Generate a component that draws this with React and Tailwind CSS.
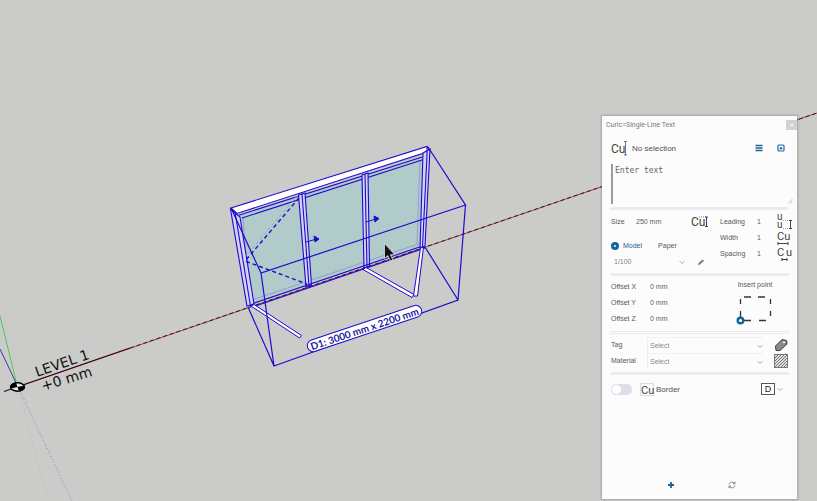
import { useState } from 'react';

// Shared bits of styling
const ROW_LABEL = 'text-[7px] leading-4 text-[#55585c]';
const ROW_VALUE = 'min-w-0 bg-transparent text-[7px] leading-4 text-[#5c5f63] outline-none';

/* ===================================================================
   SCENE (3D view behind the palette)
   =================================================================== */
function Scene() {
  return (
    <svg
      className="absolute inset-0 h-full w-full"
      viewBox="0 0 817 501"
      preserveAspectRatio="xMinYMin slice"
      fill="none"
    >
      {/* Axes */}
      <path d="M0 316 17 385" stroke="#4fc94f" />
      <path d="M0 349 17 385" stroke="#3b36b8" />
      <path d="M19 390 48 501" stroke="#8fc28f" strokeDasharray="1 3" strokeWidth=".8" />
      <path d="M20 391 72 501" stroke="#77789c" strokeDasharray="1 2" strokeWidth=".8" />
      <path d="M17 387 817 113" stroke="#a8404e" />
      <path d="M130 348 817 113" stroke="#3a181d" strokeDasharray="4 3" />
      <path d="M4 391.500 130 348" stroke="#33090f" strokeWidth="1.200" />

      {/* Level marker */}
      <ellipse cx="17.500" cy="387" rx="7" ry="4.200" fill="#e8e8e6" stroke="#000" strokeWidth="1.500" />
      <path d="M17.500 387 16 382.800C12 383 10 385.500 10.500 388.500ZM17.500 387 24.500 385.500C25 388.500 22 391 19 391.200Z" fill="#000" />
      <g fill="#111" fontFamily="'DejaVu Sans', sans-serif">
        <text transform="translate(37 377) rotate(-19)" fontSize="14">LEVEL 1</text>
        <text transform="translate(43 391) rotate(-17)" fontSize="14">+0 mm</text>
      </g>

      {/* Glass */}
      <path d="M240 215 423 157 421 247 253 304Z" fill="#b1caca" />
      <g stroke="#8f92d6" strokeWidth=".8">
        <path d="M252 300 421 243M239 211 427 153M243 217 249 298M420 160 417 244" />
      </g>

      {/* Frame */}
      <g stroke="#1d0ad0" strokeWidth="1.100">
        <path d="M231 208 427 146.500 430 151 237 213.500Z" fill="#fff" />
        <path d="M238 215.500 427 155.500M242 218 422 160" />
        <path d="M230.500 209 240 217 254 304 247 306Z" fill="#d5d3f0" />
        <path d="M235 212 250.500 306" />
        <path d="M298.500 195 305 193 311.500 285 306 287Z" fill="#d5d3f0" />
        <path d="M302 194 309 286" />
        <path d="M362 175 368 173 369.500 266 364 268Z" fill="#d5d3f0" />
        <path d="M365 174 367 267" />
        <path d="M423 153 430 149 425 246 420 248Z" fill="#d5d3f0" />
        <path d="M427 147 427 155 422.500 247" />
        <path d="M253 303.500 421 246.500M254 306.500 425 248" />
      </g>

      {/* Opening symbols */}
      <path d="M299 198 245 261 307 284" stroke="#1d0ad0" strokeWidth="1.400" strokeDasharray="4 3" />
      <path d="M297 196 246 256" stroke="#9a9cd0" strokeDasharray="3 3" />
      <g stroke="#1d0ad0" fill="#1d0ad0">
        <path d="M306 242 315 239.500M314 236 319 239 315 242Z" />
        <path d="M366 222 376 219M374 216 379 218.500 375 222Z" />
      </g>

      {/* Opened sashes */}
      <g stroke="#1d0ad0" fill="#fff">
        <path d="M251 306 254 304.500 301.500 335.500 299.500 338Z" />
        <path d="M363 269.500 366 267.500 414 294.500 412 297.500Z" />
        <path d="M420.500 248 423.500 247 417.500 296 413.500 296Z" />
      </g>

      {/* Bounding box */}
      <path
        d="M231 208 261 273 465.500 205 428 147M465.500 205 458 300 274 366 261 273M458 300 425 247M274 366 248 307"
        stroke="#1d0ad0"
        strokeWidth="1.200"
      />

      {/* Dimension tag */}
      <g transform="translate(364.500 328.500) rotate(-18.500)">
        <rect x="-60" y="-6" width="120" height="12" rx="6" fill="#fff" stroke="#1d0ad0" />
        <text
          y="4"
          textAnchor="middle"
          fill="#1a1a9c"
          fontFamily="Lato, sans-serif"
          fontSize="10"
          fontWeight="700"
        >
          D1: 3000 mm x 2200 mm
        </text>
      </g>

      {/* Cursor */}
      <path
        d="M384.500 243.500V258.500L387.800 255.600 390.300 261 392.800 260 390.400 254.700H394.800Z"
        fill="#111"
        stroke="#eee"
        strokeWidth=".7"
      />
    </svg>
  );
}

/* ===================================================================
   ICONS
   =================================================================== */
function CuText({ x, y, size = 11, children = 'Cu' }) {
  return (
    <text
      x={x}
      y={y}
      fill="#444"
      fontFamily="Roboto, sans-serif"
      fontSize={size}
    >
      {children}
    </text>
  );
}

function LogoIcon() {
  return (
    <svg className="h-4 w-4" viewBox="0 0 16 16" fill="none">
      <CuText x="0" y="13" size={12} />
      <path d="M13 1.500H16M14.500 1.500V15M13 15H16" stroke="#777" />
    </svg>
  );
}

function SizeIcon() {
  return (
    <svg className="h-4 w-[17px]" viewBox="0 0 17 16" fill="none">
      <CuText x="0" y="12" size={12} />
      <path d="M8 3H16" stroke="#666" strokeWidth=".8" strokeDasharray="1 1" />
      <path d="M14 3H17M14 12.500H17M15.500 3V12.500" stroke="#444" />
    </svg>
  );
}

function SpacingIcons() {
  return (
    <svg className="h-[52px] w-4" viewBox="0 0 16 52" fill="none">
      <CuText x="0" y="7" size={10}>u</CuText>
      <CuText x="0" y="15" size={10}>u</CuText>
      <path d="M6 7.500H14M6 15.500H14" stroke="#888" strokeWidth=".8" strokeDasharray="1 1" />
      <path d="M13.500 7.500V15.500M12 7.500H15M12 15.500H15" stroke="#444" />
      <CuText x="0" y="27" size={11} />
      <path d="M1 30.500H11M1 29V32M11 29V32" stroke="#444" />
      <CuText x="0" y="43" size={11}>C</CuText>
      <CuText x="9" y="43" size={11}>u</CuText>
      <path d="M5 46.500H10M5 45V48M10 45V48" stroke="#333" />
    </svg>
  );
}

function Chevron() {
  return (
    <svg className="pointer-events-none h-1.5 w-1.5 shrink-0" viewBox="0 0 6 6" fill="none">
      <path d="M.5 2 3 4.500 5.500 2" stroke="#999" strokeWidth=".8" />
    </svg>
  );
}

/* ===================================================================
   FORM PARTS
   =================================================================== */
function Divider() {
  return <div className="mx-2 h-[3px] shrink-0 rounded-full bg-[#ebebed]" />;
}

function Field({ id, label, value, labelWidth }) {
  return (
    <div className="flex h-4 items-center">
      <label htmlFor={id} className={`${ROW_LABEL} ${labelWidth} shrink-0`}>{label}</label>
      <input id={id} defaultValue={value} className={`${ROW_VALUE} w-8`} />
    </div>
  );
}

function SelectField({ id, label, children }) {
  return (
    <div className="flex h-4 items-center">
      <label htmlFor={id} className={`${ROW_LABEL} w-9 shrink-0`}>{label}</label>
      <div className="flex h-4 flex-1 items-center border-t border-l border-[#f0f0f1] pl-0.5">
        <select id={id} className="flex-1 appearance-none bg-transparent text-[7px] leading-3 text-[#8b8d90] outline-none">
          <option>Select</option>
        </select>
        <Chevron />
      </div>
      <button type="button" aria-label={`Pick ${label}`} className="ml-2.5 flex h-4 w-4 items-center justify-center">
        {children}
      </button>
    </div>
  );
}

function ScaleRadio({ label, checked, onChange }) {
  return (
    <label className={`flex items-center gap-1 text-[7px] leading-4 ${checked ? 'text-[#1d5f8e]' : 'text-[#55585c]'}`}>
      <input
        type="radio"
        name="space"
        checked={checked}
        onChange={onChange}
        className="hidden h-2 w-2 appearance-none rounded-full border-3 border-[#13659c] bg-white checked:block"
      />
      {label}
    </label>
  );
}

/* ===================================================================
   PALETTE
   =================================================================== */
function TextPalette() {
  const [space, setSpace] = useState('Model');

  return (
    <section className="relative flex w-[195px] flex-col bg-[#fcfcfc] shadow-[0_0_2px_1px_rgba(0,0,0,0.2)]">
      {/* Title bar */}
      <header className="flex h-[17px] shrink-0 items-center justify-between pl-1">
        <h1 className="font-[Roboto,sans-serif] text-[7px] leading-4 text-[#77797c]">Curic=Single-Line Text</h1>
        <button type="button" aria-label="Close" className="flex h-2.5 w-[11px] items-center justify-center bg-[#d2d2d2]">
          <svg className="h-1 w-1" viewBox="0 0 4 4"><path d="M.5.5 3.500 3.500M3.500.5.5 3.500" stroke="#fff" strokeWidth=".8" /></svg>
        </button>
      </header>

      {/* Selection row */}
      <div className="flex h-[30px] shrink-0 items-center pr-3 pl-[9px]">
        <LogoIcon />
        <span className="ml-[5px] flex-1 pt-0.5 text-[8px] leading-4 text-[#4c4f53]">No selection</span>
        <button type="button" aria-label="Menu" className="mr-3.5">
          <svg className="h-2 w-2" viewBox="0 0 8 8"><path d="M.5 1.500H7.500M.5 4H7.500M.5 6.500H7.500" stroke="#1d6391" strokeWidth="1.300" /></svg>
        </button>
        <button type="button" aria-label="Collapse">
          <svg className="h-2 w-2" viewBox="0 0 8 8" fill="none">
            <rect x="1" y="1" width="6" height="6" rx="1" stroke="#1d6cab" strokeWidth="1.200" />
            <path d="M2.300 5.200 4 2.600 5.700 5.200Z" fill="#1d4f80" />
          </svg>
        </button>
      </div>

      {/* Text entry */}
      <div className="relative mt-px mr-1 mb-[3px] ml-[9px] h-10 shrink-0">
        <textarea
          aria-label="Text"
          placeholder="Enter text"
          className="block h-full w-full resize-none border-l-2 border-[#9b9b9b] bg-transparent pl-0.5 font-['DejaVu_Sans_Mono',monospace] text-[8px] leading-[14px] text-[#555] outline-none placeholder:text-[#666]"
        />
        <svg className="pointer-events-none absolute right-0 bottom-0 h-1.5 w-1.5" viewBox="0 0 6 6">
          <path d="M1 5.500 5.500 1M3.500 5.500 5.500 3.500" stroke="#aaa" strokeWidth=".7" />
        </svg>
      </div>

      <Divider />

      {/* Size and spacing */}
      <div className="flex h-[63px] shrink-0 pr-1 pl-[9px]">
        <div className="flex w-[97px] shrink-0 flex-col">
          <div className="flex h-6 items-center">
            <label htmlFor="size" className={`${ROW_LABEL} w-[25px]`}>Size</label>
            <input id="size" defaultValue="250 mm" className={`${ROW_VALUE} flex-1`} />
            <SizeIcon />
          </div>
          <div className="mt-1 flex items-center gap-4">
            <ScaleRadio label="Model" checked={space === 'Model'} onChange={() => setSpace('Model')} />
            <ScaleRadio label="Paper" checked={space === 'Paper'} onChange={() => setSpace('Paper')} />
          </div>
          <div className="flex h-4 items-center">
            <select aria-label="Scale" className="w-[68px] appearance-none bg-transparent pl-[3px] text-[7px] leading-4 text-[#808285] outline-none">
              <option>1/100</option>
            </select>
            <Chevron />
            <button type="button" aria-label="Edit scale" className="ml-3">
              <svg className="h-2 w-2" viewBox="0 0 8 8"><path d="M1 7 1.500 5.200 5.500 1.500 7 2.800 3 6.500Z" fill="#777" /></svg>
            </button>
          </div>
        </div>
        <div className="ml-3 min-w-0 flex-1 pt-1">
          <Field id="leading" label="Leading" value="1" labelWidth="w-[37px]" />
          <Field id="width" label="Width" value="1" labelWidth="w-[37px]" />
          <Field id="spacing" label="Spacing" value="1" labelWidth="w-[37px]" />
        </div>
        <div className="shrink-0 pt-[3px]"><SpacingIcons /></div>
      </div>

      <Divider />

      {/* Offset and insert point */}
      <div className="flex h-[55px] shrink-0 justify-between pr-[22px] pl-[9px]">
        <div className="pt-[3px]">
          <Field id="offset-x" label="Offset X" value="0 mm" labelWidth="w-[39px]" />
          <Field id="offset-y" label="Offset Y" value="0 mm" labelWidth="w-[39px]" />
          <Field id="offset-z" label="Offset Z" value="0 mm" labelWidth="w-[39px]" />
        </div>
        <div className="flex flex-col items-center pt-px">
          <span className={ROW_LABEL}>Insert point</span>
          <button type="button" aria-label="Choose insert point">
            <svg className="mt-px h-8 w-10" viewBox="0 0 40 32" fill="none">
              <path
                d="M9 3H16M23 3H30M5.500 5V10M35.500 5V10M5.500 17V23M35.500 17V22M9 26.500H16M24 26.500H31"
                stroke="#333"
                strokeWidth="1.300"
              />
              <circle cx="5.500" cy="26.500" r="2.800" fill="#fff" stroke="#13659c" strokeWidth="2.400" />
            </svg>
          </button>
        </div>
      </div>

      <div className="mx-2 h-[3px] shrink-0 border-y border-[#ebebed]" />

      {/* Tag and material */}
      <div className="shrink-0 py-[3px] pr-2 pl-[9px]">
        <SelectField id="tag" label="Tag">
          <svg className="h-3.5 w-3.5" viewBox="0 0 14 14">
            <path d="M1.500 8 8 1.500 12.500 2.500 13 6 6 12.500H2Z" fill="#8a8a8a" stroke="#3c3c3c" strokeLinejoin="round" />
            <circle cx="10" cy="4.300" r="1" fill="#fff" />
          </svg>
        </SelectField>
        <SelectField id="material" label="Material">
          <svg className="h-3.5 w-3.5" viewBox="0 0 14 14">
            <rect x=".5" y=".5" width="13" height="13" fill="#ddd" stroke="#777" />
            <path d="M1 4 4 1M1 7 7 1M1 10 10 1M1 13 13 1M4 13 13 4M7 13 13 7M10 13 13 10" stroke="#777" />
          </svg>
        </SelectField>
      </div>

      <Divider />

      {/* Border */}
      <div className="mt-1.5 flex h-4 shrink-0 items-center pr-3.5 pl-[9px]">
        <label className="flex flex-1 items-center text-[8px] leading-4 text-[#4c4f53]">
          <input
            type="checkbox"
            className="h-[11px] w-[21px] appearance-none rounded-full bg-[#dcdfe8] before:block before:h-[11px] before:w-[11px] before:rounded-full before:border before:border-[#dcdfe8] before:bg-white checked:bg-[#13659c] checked:before:ml-2.5"
          />
          <svg className="mr-px ml-2 h-4 w-[15px]" viewBox="0 0 15 16" fill="none">
            <rect x=".5" y="2.500" width="13" height="12" stroke="#aaa" strokeWidth=".8" strokeDasharray="1 1" />
            <CuText x="1" y="13" size={11} />
          </svg>
          <span className="pt-px">Border</span>
        </label>
        <button type="button" aria-label="Border style" className="flex items-center gap-0.5">
          <span className="flex h-3 w-3.5 items-center justify-center border border-[#555] text-[9px] leading-none text-[#222]">D</span>
          <Chevron />
        </button>
      </div>

      {/* Footer actions */}
      <footer className="mt-auto mb-2 flex h-3 shrink-0 items-center justify-center gap-[53px] pl-1">
        <button type="button" aria-label="Add">
          <svg className="h-2 w-2" viewBox="0 0 8 8"><path d="M4 1V7M1 4H7" stroke="#13659c" strokeWidth="1.800" /></svg>
        </button>
        <button type="button" aria-label="Refresh">
          <svg className="h-2 w-2" viewBox="0 0 8 8" fill="none" stroke="#777" strokeWidth=".9">
            <path d="M1 3.500C1.300 1 5 .3 6.800 2.500M7 .8V2.800H5M7 4.500C6.700 7 3 7.700 1.200 5.500M1 7.200V5.200H3" />
          </svg>
        </button>
      </footer>
    </section>
  );
}

function App() {
  return (
    <main className="relative flex min-h-screen justify-end overflow-hidden bg-[#cbcbc9] pt-[116px] pr-5 pb-0.5 font-['Liberation_Sans',Arial,sans-serif]">
      <Scene />
      <TextPalette />
    </main>
  );
}

export default App;
